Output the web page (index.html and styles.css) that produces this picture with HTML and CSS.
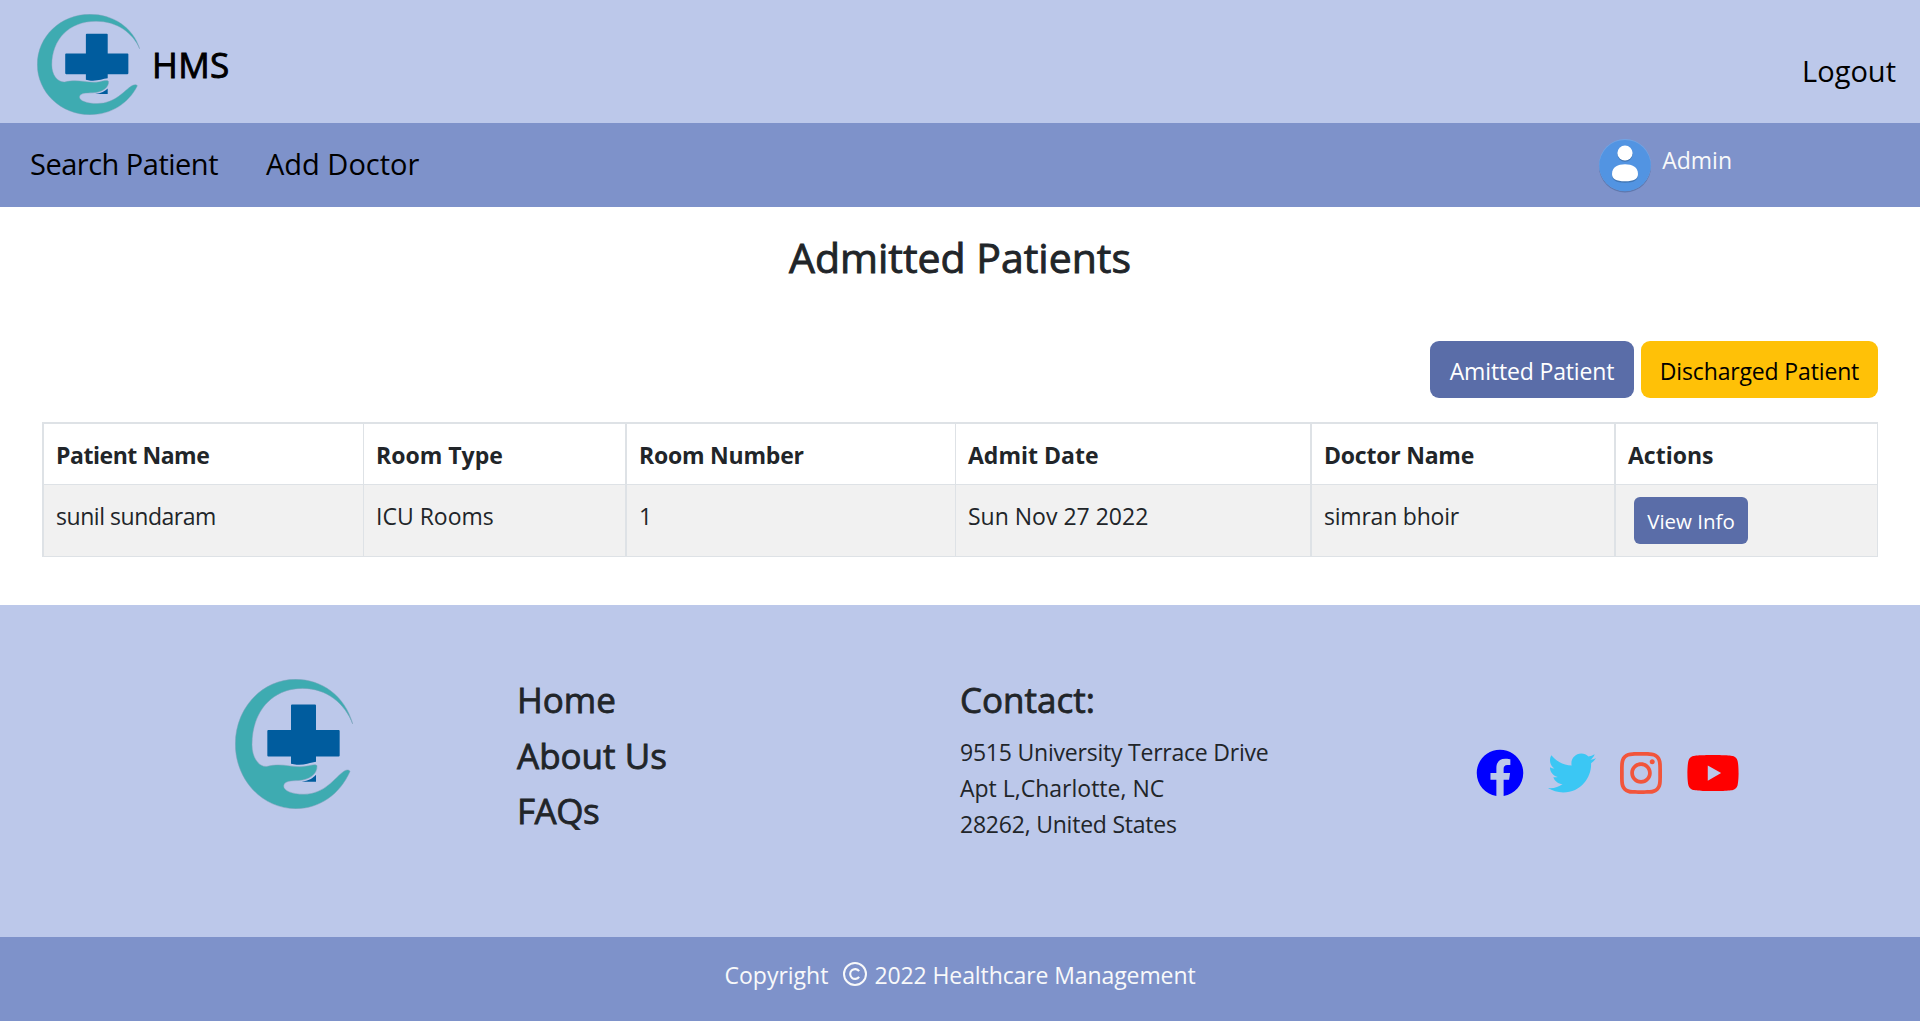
FILE: index.html
```html
<!DOCTYPE html>
<html lang="en">
<head>
<meta charset="utf-8">
<title>HMS - Admitted Patients</title>
<link rel="stylesheet" href="styles.css">
</head>
<body>
<svg class="defs" aria-hidden="true">
  <symbol id="logo" viewBox="15 22 354 388" preserveAspectRatio="none">
    <path fill="#3eabb1" stroke="#7fa3bb" stroke-width="1.5" d="M368 156C345 72 275 23 197 23C95 23 16 110 16 216C16 323 97 409 197 409C270 409 330 365 360 298C358 292 350 292 342 297C315 315 285 366 222 366C185 366 161 355 161 341C163 325 185 326 205 325C240 323 262 305 261 281C258 275 245 279 230 282C190 290 160 270 110 283C85 285 66 255 66 218C66 120 125 50 218 50C290 50 345 95 368 156Z"/>
    <path fill="#005c9e" d="M186 98H255Q258 98 258 101V174H326Q329 174 329 177V250Q329 253 326 253H258V269C240 271 225 280 200 278L183 275V253H115Q112 253 112 250V177Q112 174 115 174H183V101Q183 98 186 98ZM258 308V329H215C235 326 250 318 258 308Z"/>
  </symbol>
</svg>
<header class="header">
  <a class="brand"><svg class="brand-logo"><use href="#logo"/></svg><span class="brand-name">HMS</span></a>
  <a class="logout">Logout</a>
</header>
<nav class="nav">
  <a class="nav-link nav-search">Search Patient</a>
  <a class="nav-link nav-add">Add Doctor</a>
  <div class="user">
    <svg class="avatar" viewBox="0 0 54 55">
      <circle cx="27" cy="28.6" r="26" fill="#5f78ae"/>
      <circle cx="27" cy="27" r="26" fill="#70a5e6"/>
      <circle cx="27" cy="27.6" r="25.7" fill="#5294e2"/>
      <circle cx="27" cy="16.2" r="7.6" fill="#4076b5"/>
      <circle cx="27" cy="15" r="7.6" fill="#fff"/>
      <path fill="#4076b5" d="M14 37.2C14 30 20 27.7 27 27.7S40 30 40 37.2C40 42 36 44.7 27 44.7S14 42 14 37.2Z"/>
      <path fill="#fff" d="M14 36C14 29 20 26.3 27 26.3S40 29 40 36C40 41 36 43.3 27 43.3S14 41 14 36Z"/>
    </svg>
    <span class="user-name">Admin</span>
  </div>
</nav>
<main class="main">
  <h1 class="title">Admitted Patients</h1>
  <div class="actions">
    <button class="btn btn-admitted">Amitted Patient</button>
    <button class="btn btn-discharged">Discharged Patient</button>
  </div>
  <table class="patients">
    <colgroup><col class="c1"><col class="c2"><col class="c3"><col class="c4"><col class="c5"><col class="c6"></colgroup>
    <thead>
      <tr><th class="tight">Patient Name</th><th>Room Type</th><th class="snug">Room Number</th><th>Admit Date</th><th class="snug">Doctor Name</th><th>Actions</th></tr>
    </thead>
    <tbody>
      <tr><td class="tight">sunil sundaram</td><td>ICU Rooms</td><td>1</td><td>Sun Nov 27 2022</td><td class="snug">simran bhoir</td><td class="cell-action"><button class="btn-view">View Info</button></td></tr>
    </tbody>
  </table>
</main>
<footer class="footer">
  <svg class="footer-logo"><use href="#logo"/></svg>
  <div class="footer-links"><a>Home</a><a>About Us</a><a class="tight">FAQs</a></div>
  <div class="contact">
    <h2>Contact:</h2>
    <p><span class="snug">9515 University Terrace Drive</span><br>Apt L,Charlotte, NC<br><span class="snug">28262, United States</span></p>
  </div>
  <div class="social">
    <svg width="48" height="48" viewBox="0 0 512 512" fill="#00f"><path d="M504 256C504 119 393 8 256 8S8 119 8 256c0 123.78 90.69 226.38 209.25 245V327.69h-63V256h63v-54.64c0-62.15 37-96.48 93.67-96.48 27.14 0 55.52 4.84 55.52 4.84v61h-31.28c-30.8 0-40.41 19.12-40.41 38.73V256h68.78l-11 71.69h-57.78V501C413.31 482.38 504 379.78 504 256z"/></svg>
    <svg width="48" height="48" viewBox="0 0 512 512" fill="#3bc7f4"><path d="M459.37 151.716c.325 4.548.325 9.097.325 13.645 0 138.72-105.583 298.558-298.558 298.558-59.452 0-114.68-17.219-161.137-47.106 8.447.974 16.568 1.299 25.34 1.299 49.055 0 94.213-16.568 130.274-44.832-46.132-.975-84.792-31.188-98.112-72.772 6.498.974 12.995 1.624 19.818 1.624 9.421 0 18.843-1.3 27.614-3.573-48.081-9.747-84.143-51.98-84.143-102.985v-1.299c13.969 7.797 30.214 12.67 47.431 13.319-28.264-18.843-46.781-51.005-46.781-87.391 0-19.492 5.197-37.36 14.294-52.954 51.655 63.675 129.3 105.258 216.365 109.807-1.624-7.797-2.599-15.918-2.599-24.04 0-57.828 46.782-104.934 104.934-104.934 30.213 0 57.502 12.67 76.67 33.137 23.715-4.548 46.456-13.32 66.599-25.34-7.798 24.366-24.366 44.833-46.132 57.827 21.117-2.273 41.584-8.122 60.426-16.243-14.292 20.791-32.161 39.308-52.628 54.253z"/></svg>
    <svg width="42" height="48" viewBox="0 0 448 512" fill="#f2553b"><path d="M224.1 141c-63.6 0-114.9 51.3-114.9 114.9s51.3 114.9 114.9 114.9S339 319.5 339 255.9 287.7 141 224.1 141zm0 189.6c-41.1 0-74.7-33.5-74.7-74.7s33.5-74.7 74.7-74.7 74.7 33.5 74.7 74.7-33.6 74.7-74.7 74.7zm146.4-194.3c0 14.9-12 26.8-26.8 26.8-14.9 0-26.8-12-26.8-26.8s12-26.8 26.8-26.8 26.8 12 26.8 26.8zm76.1 27.2c-1.7-35.9-9.9-67.7-36.2-93.9-26.2-26.2-58-34.4-93.9-36.2-37-2.1-147.9-2.1-184.9 0-35.8 1.7-67.6 9.9-93.9 36.1s-34.4 58-36.2 93.9c-2.1 37-2.1 147.9 0 184.9 1.7 35.9 9.9 67.7 36.2 93.9s58 34.4 93.9 36.2c37 2.1 147.9 2.1 184.9 0 35.9-1.7 67.7-9.9 93.9-36.2 26.2-26.2 34.4-58 36.2-93.9 2.1-37 2.1-147.8 0-184.8zM398.8 388c-7.8 19.6-22.9 34.7-42.6 42.6-29.5 11.7-99.5 9-132.1 9s-102.7 2.6-132.1-9c-19.6-7.8-34.7-22.9-42.6-42.6-11.7-29.5-9-99.5-9-132.1s-2.6-102.7 9-132.1c7.8-19.6 22.9-34.7 42.6-42.6 29.5-11.7 99.5-9 132.1-9s102.7-2.6 132.1 9c19.6 7.8 34.7 22.9 42.6 42.6 11.7 29.5 9 99.5 9 132.1s2.7 102.7-9 132.1z"/></svg>
    <svg width="54" height="48" viewBox="0 0 576 512" fill="#f00"><path d="M549.655 124.083c-6.281-23.65-24.787-42.276-48.284-48.597C458.781 64 288 64 288 64S117.22 64 74.629 75.486c-23.497 6.322-42.003 24.947-48.284 48.597-11.412 42.867-11.412 132.305-11.412 132.305s0 89.438 11.412 132.305c6.281 23.65 24.787 41.5 48.284 47.821C117.22 448 288 448 288 448s170.78 0 213.371-11.486c23.497-6.321 42.003-24.171 48.284-47.821 11.412-42.867 11.412-132.305 11.412-132.305s0-89.438-11.412-132.305zm-317.51 213.508V175.185l142.739 81.205-142.739 81.201z"/></svg>
  </div>
</footer>
<div class="copyright">
  <span>Copyright</span>
  <svg class="copy-icon" viewBox="0 0 24 24" fill="none" stroke="#f8f9fa" stroke-width="2"><circle cx="12" cy="12" r="11"/><path d="M16.1 9.2A4.9 4.9 0 1 0 16.1 14.8" stroke-width="2.1"/></svg>
  <span class="copy-text">2022 Healthcare Management</span>
</div>
</body>
</html>
```
FILE: styles.css
```css
* { box-sizing: border-box; }
body { margin: 0; background: #fff; color: #212529; font-family: "Open Sans", "Noto Sans", sans-serif; font-size: 23px; line-height: 36px; }
svg { display: block; flex: none; }
.defs { position: absolute; width: 0; height: 0; }
.tight { letter-spacing: -0.45px; }
.snug { letter-spacing: -0.22px; }
.header { display: flex; justify-content: space-between; align-items: center; height: 123px; padding: 6px 24px 0 37px; background: #bcc8ea; color: #000; }
.brand { display: flex; align-items: center; gap: 12px; }
.brand-logo { width: 103px; height: 101px; }
.brand-name { font-size: 35px; line-height: 50px; letter-spacing: 0.4px; -webkit-text-stroke: 0.9px; }
.logout { font-size: 29px; padding-top: 12px; }
.nav { display: flex; align-items: center; height: 84px; padding: 0 188px 0 30px; background: #7e92ca; color: #000; }
.nav-link { font-size: 29px; margin-top: -2px; }
.nav-search { letter-spacing: -0.5px; }
.nav-add { margin-left: 48px; }
.user { display: flex; align-items: center; gap: 10px; margin-left: auto; color: #f8f9fa; }
.avatar { width: 54px; height: 55px; }
.user-name { margin-top: -10px; }
.main { height: 398px; padding: 25px 42px 0; }
.title { margin: 0; font-size: 41px; font-weight: 400; line-height: 50px; text-align: center; -webkit-text-stroke: 0.9px; }
.actions { display: flex; justify-content: flex-end; gap: 7px; margin-top: 59px; }
.btn { height: 57px; padding: 3px 0 0; border: 0; border-radius: 9px; font: inherit; text-align: center; letter-spacing: -0.15px; }
.btn-admitted { width: 204px; background: #5a6da8; color: #fff; }
.btn-discharged { width: 237px; background: #ffc107; color: #000; }
.patients { width: 1836px; margin-top: 24px; table-layout: fixed; border-spacing: 0; border: solid #dee2e6; border-width: 2px 0 0 2px; }
.c1 { width: 320px; }
.c2 { width: 263px; }
.c3 { width: 329px; }
.c4 { width: 356px; }
.c5 { width: 304px; }
.c6 { width: 262px; }
.patients th, .patients td { padding: 13px 12px 11px; border: solid #dee2e6; border-width: 0 1px 1px 0; text-align: left; vertical-align: top; }
.patients th { font-weight: 700; }
.patients td { background: #f1f1f1; }
.patients :is(th, td):nth-child(2), .patients :is(th, td):nth-child(4), .patients :is(th, td):nth-child(5) { border-right-width: 2px; }
.patients .cell-action { padding: 12px 18px; }
.btn-view { display: block; width: 114px; height: 47px; padding: 0; border: 0; border-radius: 6px; background: #5a6da8; color: #fff; font: inherit; font-size: 20.5px; }
.footer { display: flex; height: 332px; padding-left: 235px; background: #bcc8ea; }
.footer-logo { width: 118px; height: 130px; margin-top: 74px; }
.footer-links { display: flex; flex-direction: column; gap: 12.5px; width: 443px; margin: 73px 0 0 164px; font-size: 35px; line-height: 43px; -webkit-text-stroke: 0.8px; }
.contact { width: 516px; margin-top: 73px; }
.contact h2 { margin: 0; font-size: 35px; font-weight: 400; line-height: 43px; -webkit-text-stroke: 0.8px; }
.contact p { margin: 13px 0 0; }
.social { display: flex; gap: 24px; margin-top: 144px; }
.copyright { display: flex; justify-content: center; height: 84px; padding-top: 20px; background: #7e92ca; color: #f8f9fa; }
.copy-icon { width: 24px; height: 24px; margin: 5px 7px 0 15px; }
.copy-text { letter-spacing: -0.1px; }
```
